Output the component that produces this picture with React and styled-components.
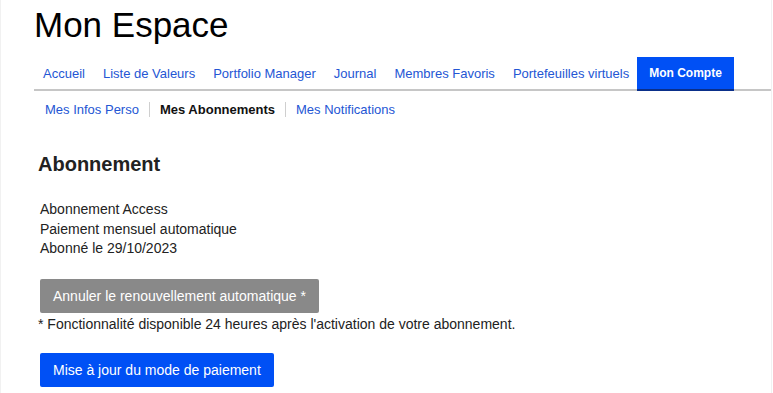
import styled, {createGlobalStyle} from 'styled-components';

const GlobalStyle = createGlobalStyle`
  body {
    margin: 0;
    background: #fff;
    font-family: "Liberation Sans", Arial, sans-serif;
  }
`;

const tabs = [
  'Accueil',
  'Liste de Valeurs',
  'Portfolio Manager',
  'Journal',
  'Membres Favoris',
  'Portefeuilles virtuels',
  'Mon Compte',
];

const subTabs = ['Mes Infos Perso', 'Mes Abonnements', 'Mes Notifications'];

function App() {
  return (
    <Page>
      <GlobalStyle />
      <Title>Mon Espace</Title>
      <Nav>
        {tabs.map(t => (
          <Tab key={t} $active={t === 'Mon Compte'}>
            {t}
          </Tab>
        ))}
      </Nav>
      <SubNav>
        {subTabs.map((t, i) => (
          <SubItem key={t} $active={t === 'Mes Abonnements'} $first={i === 0}>
            {t}
          </SubItem>
        ))}
      </SubNav>
      <Section>
        <Heading>Abonnement</Heading>
        <Info>
          <div>Abonnement Access</div>
          <div>Paiement mensuel automatique</div>
          <div>Abonné le 29/10/2023</div>
        </Info>
        <Button $variant="gray">Annuler le renouvellement automatique *</Button>
        <Note>* Fonctionnalité disponible 24 heures après l'activation de votre abonnement.</Note>
        <Button $variant="blue">Mise à jour du mode de paiement</Button>
      </Section>
    </Page>
  );
}

export default App;

const Page = styled.div`
  width: 772px;
  height: 393px;
  box-sizing: border-box;
  border-left: 1px solid #f1f1f1;
  border-right: 1px solid #f1f1f1;
  padding-left: 33px;
  overflow: hidden;
`;

const Title = styled.h1`
  margin: 5px 0 0;
  font-size: 35px;
  font-weight: normal;
  line-height: 39px;
  color: #000;
`;

const Nav = styled.div`
  display: flex;
  align-items: stretch;
  margin-top: 13px;
  height: 32px;
  border-bottom: 2px solid #c6c6c6;
`;

const Tab = styled.a`
  display: flex;
  align-items: center;
  padding: ${p => (p.$active ? '0 12px' : '0 9px')};
  margin-left: ${p => (p.$active ? '-1px' : '0')};
  margin-bottom: -2px;
  font-size: ${p => (p.$active ? '12px' : '13px')};
  font-weight: ${p => (p.$active ? 'bold' : 'normal')};
  color: ${p => (p.$active ? '#fff' : '#2456d4')};
  background: ${p => (p.$active ? '#0050f5' : 'transparent')};
  border-bottom: 2px solid ${p => (p.$active ? '#0a2f8a' : 'transparent')};
  cursor: pointer;
`;

const SubNav = styled.div`
  display: flex;
  align-items: center;
  padding: 9px 0 0 11px;
  height: 18px;
`;

const SubItem = styled.a`
  display: flex;
  align-items: center;
  font-size: 13px;
  line-height: 15px;
  font-weight: ${p => (p.$active ? 'bold' : 'normal')};
  color: ${p => (p.$active ? '#111' : '#2456d4')};
  padding: ${p => (p.$first ? '0 10px 0 0' : '0 10px')};
  border-left: ${p => (p.$first ? 'none' : '1px solid #cfcfcf')};
  height: 15px;
  cursor: pointer;
`;

const Section = styled.div`
  display: flex;
  flex-direction: column;
  align-items: flex-start;
  padding: 35px 0 0 4px;
`;

const Heading = styled.h2`
  margin: 0;
  font-size: 20px;
  line-height: 23px;
  font-weight: bold;
  color: #222;
`;

const Info = styled.div`
  margin-top: 24px;
  padding-left: 2px;
  font-size: 14px;
  line-height: 19.5px;
  color: #222;
`;

const Button = styled.button`
  margin-top: ${p => (p.$variant === 'gray' ? '20px' : '19px')};
  margin-left: 2px;
  height: 34px;
  padding: 0 13px;
  border: none;
  border-radius: 2px;
  font-family: "Liberation Sans", Arial, sans-serif;
  font-size: 14px;
  color: #fff;
  background: ${p => (p.$variant === 'gray' ? '#898989' : '#0050f5')};
  cursor: pointer;
`;

const Note = styled.div`
  margin-top: 1px;
  font-size: 14px;
  line-height: 20px;
  color: #222;
`;
